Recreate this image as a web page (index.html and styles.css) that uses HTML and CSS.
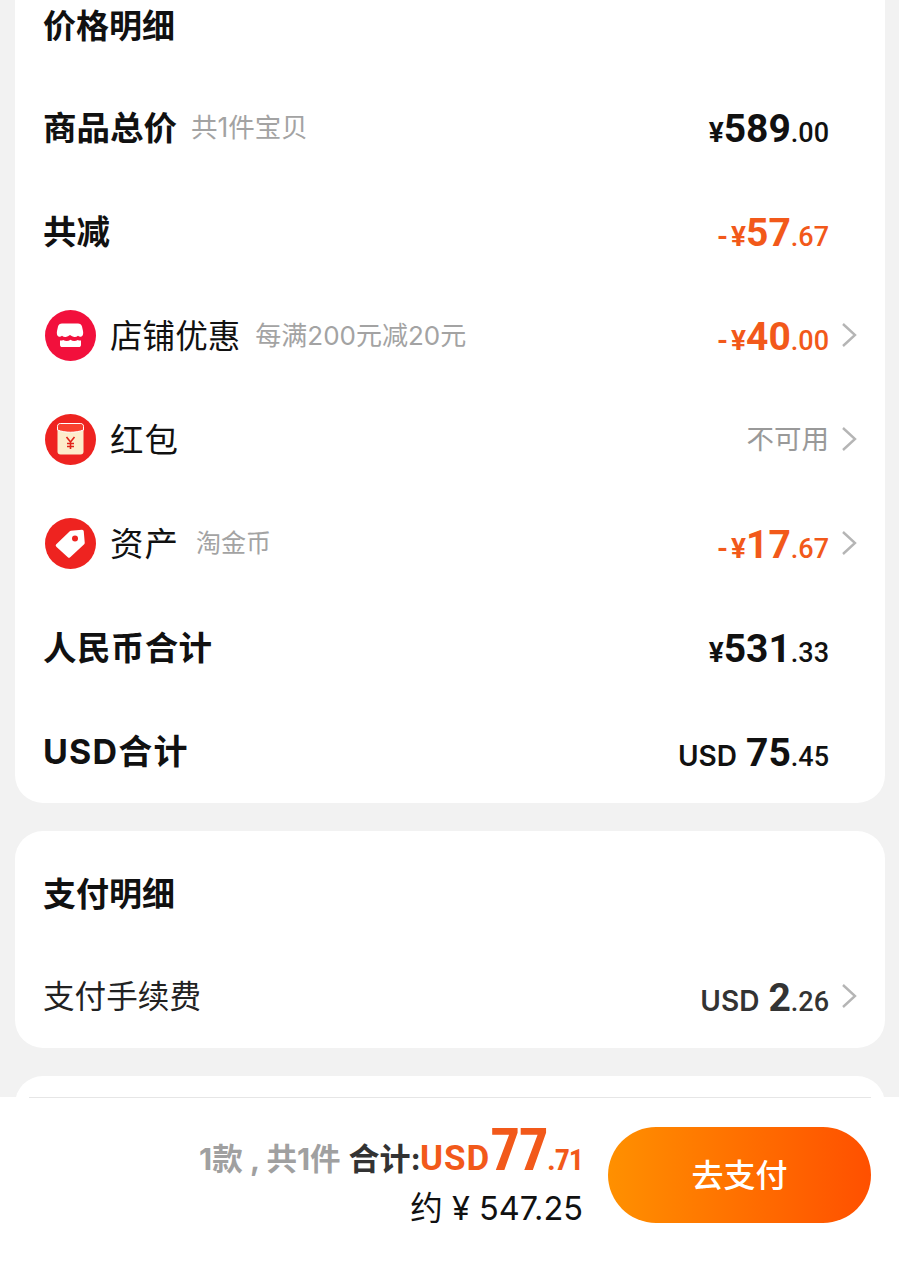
FILE: index.html
```html
<!DOCTYPE html>
<html lang="zh-CN">
  <head>
    <meta charset="UTF-8" />
    <title>价格明细</title>
    <link rel="stylesheet" href="styles.css">
  </head>
  <body>
    <div class="page">
      <section class="card price-card">
        <h2 class="card-title">价格明细</h2>

        <div class="row">
          <div class="label-wrap">
            <span class="label-bold">商品总价</span>
            <span class="note note-first">共1件宝贝</span>
          </div>
          <div class="value"><span class="cur">¥</span><span class="big">589</span><span class="small">.00</span></div>
        </div>

        <div class="row">
          <div class="label-wrap"><span class="label-bold">共减</span></div>
          <div class="value orange"><span class="cur minus">-¥</span><span class="big">57</span><span class="small">.67</span></div>
        </div>

        <div class="row row-link">
          <div class="label-wrap">
            <svg class="icon" viewBox="0 0 51 51">
              <circle cx="25.5" cy="25.5" r="25.5" fill="#f2103c" />
              <path d="M18 13.500h15c2 0 3.500 1 4 3l1 4.500c.5 2.500 0 5-1.500 5.500-1.300.4-2.500.1-3.500-.8-1.200 1-2.600 1.500-3.800 1.200-1.500-.3-2.900-.9-4.200-2-1.300 1.100-2.700 1.700-4.200 2-1.200.3-2.600-.2-3.800-1.200-1 .9-2.200 1.200-3.500.8-1.500-.5-2-3-1.500-5.500l1-4.500c.5-2 2-3 4-3z" fill="#fff" />
              <path d="M15 30.500c1.200.2 2.200 0 3.200-.6 2.300 1.400 5 1.400 7.300-.2 2.300 1.600 5 1.600 7.300.2 1 .6 2 .8 3.200.6v4.200c0 1.500-.8 2.300-2.300 2.300H17.300c-1.500 0-2.300-.8-2.300-2.300z" fill="#fff" />
            </svg>
            <span class="label">店铺优惠</span>
            <span class="note note-shop">每满200元减20元</span>
          </div>
          <div class="value orange"><span class="cur minus">-¥</span><span class="big">40</span><span class="small">.00</span></div>
          <svg class="arrow" viewBox="0 0 16 26"><path d="M2 2l12 11L2 24" /></svg>
        </div>

        <div class="row row-link">
          <div class="label-wrap">
            <svg class="icon" viewBox="0 0 51 51">
              <circle cx="25.5" cy="25.5" r="25.500" fill="#ee2320" />
              <rect x="12.500" y="9.500" width="26" height="31" rx="3" fill="#fdeccb" />
              <path d="M12.500 12.500c0-2 1.200-3 3-3h20c1.800 0 3 1 3 3v3.500c-8 3-18 3-26 0z" fill="#f9402f" stroke="#fff" stroke-width="1" />
              <path d="M21.500 23l4 5 4-5M25.500 28v7M22 29.500h7M22 32.500h7" fill="none" stroke="#e2231a" stroke-width="1.600" />
            </svg>
            <span class="label label-short">红包</span>
          </div>
          <div class="value-text">不可用</div>
          <svg class="arrow" viewBox="0 0 16 26"><path d="M2 2l12 11L2 24" /></svg>
        </div>

        <div class="row row-link">
          <div class="label-wrap">
            <svg class="icon" viewBox="0 0 51 51">
              <circle cx="25.5" cy="25.5" r="25.500" fill="#ee2320" />
              <polygon points="26,14.500 37,13.500 38,25 24,38 12.500,27.500" fill="#fff" stroke="#fff" stroke-width="3.500" stroke-linejoin="round" />
              <circle cx="30" cy="20.500" r="3" fill="#ee2320" />
            </svg>
            <span class="label label-short">资产</span>
            <span class="note note-asset">淘金币</span>
          </div>
          <div class="value orange"><span class="cur minus">-¥</span><span class="big">17</span><span class="small">.67</span></div>
          <svg class="arrow" viewBox="0 0 16 26"><path d="M2 2l12 11L2 24" /></svg>
        </div>

        <div class="row">
          <div class="label-wrap"><span class="label-bold label-wide">人民币合计</span></div>
          <div class="value"><span class="cur">¥</span><span class="big">531</span><span class="small">.33</span></div>
        </div>

        <div class="row">
          <div class="label-wrap"><span class="label-bold label-usd">USD合计</span></div>
          <div class="value"><span class="cur cur-usd">USD</span><span class="big">75</span><span class="small">.45</span></div>
        </div>
      </section>

      <section class="card pay-card">
        <h2 class="card-title">支付明细</h2>
        <div class="row row-link">
          <div class="label-wrap"><span class="label label-fee">支付手续费</span></div>
          <div class="value dark"><span class="cur cur-usd">USD</span><span class="big">2</span><span class="small">.26</span></div>
          <svg class="arrow" viewBox="0 0 16 26"><path d="M2 2l12 11L2 24" /></svg>
        </div>
      </section>

      <section class="card next-card"></section>
    </div>

    <footer class="bottom-bar">
      <div class="bar-inner">
        <div class="sum">
          <div class="sum-line">
            <span class="count">1款 , 共1件</span>
            <span class="sum-label">合计:</span>
            <span class="sum-usd">USD</span><span class="sum-big">77</span><span class="sum-small">.71</span>
          </div>
          <div class="sum-cny">约 ¥ 547.25</div>
        </div>
        <button class="pay-btn">去支付</button>
      </div>
    </footer>
  </body>
</html>
```

FILE: styles.css
```css
* {
  margin: 0;
  padding: 0;
  box-sizing: border-box;
  font-family: "Inter", "Noto Sans CJK SC", sans-serif;
}

body {
  width: 899px;
  height: 1275px;
  background-color: #f2f2f2;
  position: relative;
  overflow: hidden;
  color: #111;
}

.page {
  display: flex;
  flex-direction: column;
  gap: 28px;
  padding: 0 14px 0 15px;
}

.card {
  background: #fff;
  border-radius: 28px;
}

.price-card {
  border-radius: 0 0 28px 28px;
}

.card-title {
  font-size: 33px;
  font-weight: 700;
  line-height: 52px;
  padding-left: 28px;
}

.price-card .card-title {
  height: 75px;
}

.pay-card {
  height: 217px;
  padding-top: 37px;
}

.pay-card .row {
  height: 104px;
  margin-top: 24px;
}

.next-card {
  height: 120px;
}

.row {
  display: flex;
  align-items: center;
  height: 104px;
  padding: 0 28px 0 29px;
}

.label-wrap {
  display: flex;
  align-items: center;
  flex: 1;
  margin-left: -1px;
}

.label-wrap span {
  padding-bottom: 4px;
}

.label-bold {
  font-size: 33.5px;
  font-weight: 700;
}

.label-wide {
  letter-spacing: 0.4px;
}

.label-usd {
  font-size: 34px;
  letter-spacing: 1.2px;
}

.label {
  font-size: 32.6px;
}

.label-short {
  font-size: 33.5px;
  letter-spacing: 1px;
}

.label-fee {
  font-size: 31.6px;
  color: #222;
}

.icon {
  width: 51px;
  height: 51px;
  margin: 0 14px 0 2px;
  flex-shrink: 0;
}

.note {
  color: #a3a3a3;
}

.note-first {
  margin-left: 14px;
  font-size: 26.5px;
}

.note-shop {
  margin-left: 15px;
  font-size: 26px;
}

.note-asset {
  margin-left: 17px;
  font-size: 25px;
}

.value {
  margin-right: 28px;
  font-weight: 700;
  display: flex;
  align-items: baseline;
  line-height: 1;
  position: relative;
  top: 2px;
}

.row-link .value {
  margin-right: 12px;
}

.value span {
  font-family: "Roboto", "Noto Sans", sans-serif;
}

.value .cur {
  font-size: 28px;
}

.value .minus {
  letter-spacing: 3px;
  margin-right: -3px;
}

.value .cur-usd {
  font-family: "Inter", sans-serif;
  font-size: 28px;
  margin-right: 9px;
  font-weight: 600;
}

.big {
  font-size: 39px;
}

.small {
  font-size: 27px;
  font-weight: 500;
}

.orange {
  color: #f2591a;
}

.dark {
  color: #333;
}

.value-text {
  color: #999;
  font-size: 27.5px;
  margin-right: 12px;
  padding-bottom: 4px;
}

.arrow {
  width: 16px;
  height: 26px;
  fill: none;
  stroke: #b5b5b5;
  stroke-width: 2.4;
}

.bottom-bar {
  position: absolute;
  left: 0;
  right: 0;
  bottom: 0;
  height: 178px;
  padding: 0 28px 0 29px;
  background: #fff;
}

.bar-inner {
  display: flex;
  justify-content: flex-end;
  gap: 25px;
  padding-top: 23px;
  border-top: 1px solid #e6e6e6;
}

.sum {
  display: flex;
  flex-direction: column;
  align-items: flex-end;
}

.sum-line {
  display: flex;
  align-items: baseline;
  line-height: 58px;
}

.count {
  color: #a0a0a0;
  font-size: 30.5px;
  font-weight: 700;
  margin-right: 8px;
}

.sum-label {
  color: #333;
  font-size: 31px;
  font-weight: 700;
}

.sum-usd,
.sum-big,
.sum-small {
  color: #f2591a;
  font-family: "Roboto", sans-serif;
  font-weight: 700;
}

.sum-usd {
  font-size: 35px;
  letter-spacing: 1px;
  margin-left: -1px;
}

.sum-big {
  font-size: 59px;
  font-stretch: 75%;
  letter-spacing: -1.5px;
}

.sum-small {
  font-size: 30px;
  font-stretch: 75%;
  letter-spacing: -1px;
}

.sum-cny {
  font-size: 32.5px;
  line-height: 40px;
  color: #111;
}

.pay-btn {
  width: 263px;
  height: 96px;
  margin-top: 6px;
  padding-bottom: 4px;
  border: none;
  border-radius: 48px;
  background: linear-gradient(90deg, #ff9000, #ff5000);
  color: #fff;
  font-size: 32px;
  font-weight: 500;
}
```
